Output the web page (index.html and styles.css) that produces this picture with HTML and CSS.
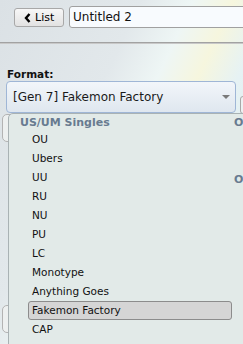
FILE: index.html
```html
<!DOCTYPE html>
<html>
<head>
    <meta name="viewport" content="width=device-width, initial-scale=1.0">
    <title>Teambuilder</title>
    <link rel="stylesheet" href="styles.css">
</head>
<body>
    <div class="page">
        <div class="topbar">
            <button class="back">
                <svg width="7" height="10" viewBox="0 0 7 10"><polyline points="5.5,1 2,5 5.5,9" fill="none" stroke="#000" stroke-width="2.4"/></svg>
                List
            </button>
            <input class="teamname" type="text" value="Untitled 2">
        </div>

        <div class="format">
            <label class="label">Format:</label>
            <div class="selectrow">
                <button class="select">[Gen 7] Fakemon Factory<span class="caret"></span></button>
                <button class="side"></button>
            </div>
            <!-- things behind the popup -->
            <div class="under">
                <div class="slot"></div>
                <div class="slot second"></div>
            </div>
        </div>

        <!-- format dropdown -->
        <div class="popup">
            <div class="col">
                <h3>US/UM Singles</h3>
                <ul>
                    <li><button>OU</button></li>
                    <li><button>Ubers</button></li>
                    <li><button>UU</button></li>
                    <li><button>RU</button></li>
                    <li><button>NU</button></li>
                    <li><button>PU</button></li>
                    <li><button>LC</button></li>
                    <li><button>Monotype</button></li>
                    <li><button>Anything Goes</button></li>
                    <li><button class="cur">Fakemon Factory</button></li>
                    <li><button>CAP</button></li>
                </ul>
            </div>
            <div class="col">
                <h3>O</h3>
                <ul>
                    <li><button></button></li>
                    <li><button></button></li>
                </ul>
                <h3 class="next">O</h3>
            </div>
        </div>
    </div>
</body>
</html>
```

FILE: styles.css
```css
* {
    margin: 0;
    padding: 0;
    box-sizing: border-box;
}
body {
    font-family: "DejaVu Sans", Verdana, sans-serif;
    height: 344px;
    overflow: hidden;
    background: linear-gradient(115deg, #dbe1e5 0%, #e2e8eb 35%, #eef6f5 48%, #f6f6de 58%, #e6f2f4 68%, #dbe6ea 100%);
}
.page {
    position: relative;
    height: 344px;
    overflow: hidden;
}
.topbar {
    display: flex;
    align-items: flex-start;
    gap: 5px;
    height: 43px;
    padding: 6px 0 0 14px;
    border-bottom: 1px solid #a2a2a2;
    box-shadow: 0 1px 0 #c8c8c8;
}
.back {
    display: flex;
    align-items: center;
    gap: 4px;
    flex-shrink: 0;
    width: 50px;
    height: 19px;
    margin-top: 2px;
    padding-left: 9px;
    border: 1px solid #a8a8a8;
    border-radius: 3px;
    background: linear-gradient(#f7f7f7, #e2e2e2);
    font-family: inherit;
    font-size: 11px;
    color: #000;
}
.teamname {
    flex: 1;
    height: 22px;
    margin-right: -10px;
    padding-left: 3px;
    border: 1px solid #a0a0a0;
    border-radius: 3px;
    background: #f8fbfe;
    font-family: inherit;
    font-size: 12px;
    color: #111;
}
.format {
    padding-top: 25px;
}
.label {
    display: block;
    margin-left: 7px;
    font-size: 10.5px;
    line-height: 13px;
    font-weight: bold;
    color: #111;
}
.selectrow {
    display: flex;
}
.select {
    display: flex;
    align-items: center;
    flex-shrink: 0;
    width: 230px;
    height: 32px;
    margin-left: 6px;
    padding: 0 5px 0 6px;
    border: 1px solid #9fb6d6;
    border-radius: 4px;
    background: linear-gradient(#f2f6fa, #dfe7ef);
    font-family: inherit;
    font-size: 12px;
    color: #1a1a1a;
    text-align: left;
}
.caret {
    margin-left: auto;
    border-left: 4px solid transparent;
    border-right: 4px solid transparent;
    border-top: 4px solid #7a7a7a;
}
.side {
    align-self: flex-end;
    flex-shrink: 0;
    width: 30px;
    height: 18px;
    margin: 0 0 -1px 4px;
    border: 1px solid #a8a8a8;
    border-radius: 3px;
    background: #eef1f3;
}
.under {
    padding-top: 1px;
}
.slot {
    width: 100px;
    height: 28px;
    margin-left: 2px;
    border: 1px solid #b3b3b3;
    border-radius: 5px;
    background: #edf0f0;
}
.slot.second {
    margin-top: 163px;
}
.popup {
    position: absolute;
    left: 8px;
    top: 113px;
    width: 300px;
    height: 260px;
    display: flex;
    padding-left: 11px;
    border: 1px solid #a9b2b4;
    border-radius: 5px;
    background: #e2eae8;
}
.col {
    width: 214px;
    flex-shrink: 0;
}
.col h3 {
    padding-top: 1px;
    font-size: 11px;
    line-height: 15px;
    font-weight: bold;
    color: #687b90;
    white-space: nowrap;
}
.col h3.next {
    margin-top: 3px;
}
.col ul {
    list-style: none;
    padding-left: 8px;
}
.col li button {
    display: block;
    width: 204px;
    height: 19px;
    padding-left: 3px;
    border: 1px solid transparent;
    border-radius: 3px;
    background: none;
    font-family: inherit;
    font-size: 10.5px;
    line-height: 17px;
    color: #111;
    text-align: left;
    white-space: nowrap;
}
.col li button.cur {
    border-color: #8c8c8c;
    background: #d5d5d5;
}
```
